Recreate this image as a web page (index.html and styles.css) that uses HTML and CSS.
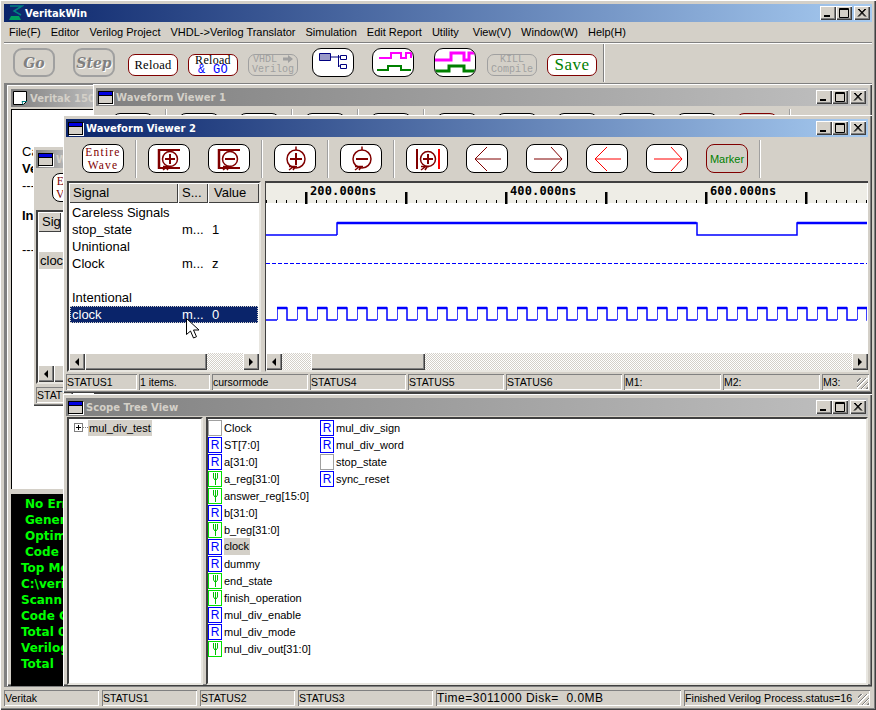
FILE: index.html
```html
<!DOCTYPE html>
<html>
<head>
<meta charset="utf-8">
<title>VeritakWin</title>
<link rel="stylesheet" href="styles.css">
</head>
<body>
<svg class="defs" width="0" height="0">
  <symbol id="ctl-min" viewBox="0 0 16 14"><rect x="4" y="9" width="6" height="2" fill="#000"/></symbol>
  <symbol id="ctl-max" viewBox="0 0 16 14"><path d="M3.500 2.500h9v9h-9z M3 3.500h10" fill="none" stroke="#000"/></symbol>
  <symbol id="ctl-close" viewBox="0 0 16 14"><path d="M4 3l7 7.500M5 3l7 7.500M11 3l-7 7.500M12 3l-7 7.500" stroke="#000" fill="none"/></symbol>
  <symbol id="wire" viewBox="0 0 7 14"><path d="M1.500 1v5l1.500 2M3.500 1v12M5.500 1v5l-1.500 2" stroke="#00c000" stroke-width="1" fill="none"/></symbol>
  <symbol id="handle" viewBox="0 0 42 29"><path d="M15 26l4-3M15 22.500h8M19 26l2-3" stroke="#800000" stroke-width="1.500" fill="none"/></symbol>
</svg>

<div class="app">
  <div class="title">
    <svg class="appicon" width="17" height="16" viewBox="0 0 17 16"><path d="M3 1h12L7 6l7 4" stroke="#008080" stroke-width="1.500" fill="none"/><path d="M2 15l2-4h8l2 4z" fill="#00a060"/></svg>
    <span class="title-text">VeritakWin</span>
    <div class="ctls">
      <span class="ctl"><svg><use href="#ctl-min"/></svg></span>
      <span class="ctl"><svg><use href="#ctl-max"/></svg></span>
      <span class="ctl ctl-x"><svg><use href="#ctl-close"/></svg></span>
    </div>
  </div>

  <div class="menu">
    <span>File(F)</span><span>Editor</span><span>Verilog Project</span><span>VHDL-&gt;Verilog Translator</span><span>Simulation</span><span>Edit Report</span><span>Utility</span><span class="menu-view">View(V)</span><span>Window(W)</span><span>Help(H)</span>
  </div>

  <div class="maintools">
    <div class="mb big off go">Go</div>
    <div class="mb big off go m18">Step</div>
    <div class="mb small red m13">Reload</div>
    <div class="mb small red two m10">Reload<b>&amp; GO</b></div>
    <div class="mb small off two m10">VHDL <svg width="10" height="8" viewBox="0 0 10 8"><path d="M0 2.500h5V0l5 4-5 4V5.500H0z" fill="#a0a0a0"/></svg><br>Verilog</div>
    <div class="mb big m14">
      <svg width="40" height="27" viewBox="314 49 40 27"><path d="M320.500 53.500h11v7h-11z" fill="#9a9ac8" stroke="#000080"/><path d="M331 57h8M339.500 55v12M339 57h2M339 66h2M341.500 55.500h6v4h-6zM341.500 64.500h6v4h-6z" fill="none" stroke="#000080"/></svg>
    </div>
    <div class="mb big m18">
      <svg width="40" height="27" viewBox="374 49 40 27"><path d="M380 58h12v-5h10v5h5v-5h5v5" fill="none" stroke="#ff00ff" stroke-width="2"/><path d="M378 70h11v-4h13v4h10" fill="none" stroke="#008000" stroke-width="2"/></svg>
    </div>
    <div class="mb big m20">
      <svg width="40" height="27" viewBox="436 49 40 27"><path d="M436 60h16v-7h13v7h5v-7h6" fill="none" stroke="#ff00ff" stroke-width="3"/><path d="M436 71h14v-5h15v5h11" fill="none" stroke="#008000" stroke-width="3"/></svg>
    </div>
    <div class="mb small off two m11">KILL<br>Compile</div>
    <div class="mb small red save m10">Save</div>
    <div class="tool-sep"></div>
  </div>

  <div class="mdi">

    <!-- compile log behind everything -->
    <div class="win win-log">
      <div class="title off">
        <svg class="docicon" width="16" height="16" viewBox="0 0 16 16"><path d="M1.500 1.500h13v10l-3 3h-10z" fill="#fff" stroke="#000"/><path d="M11 14.500l-1-3h5" fill="none" stroke="#008080"/></svg>
        <span class="title-text">Veritak 150</span>
      </div>
      <div class="log-top">
        <p>Ca</p>
        <p class="bold">Ve</p>
        <p>---</p>
        <p class="gap bold">In</p>
        <p class="gap2">---</p>
      </div>
      <div class="log-bottom">
        <p class="in">No Err</p>
        <p class="in">Gener</p>
        <p class="in">Optim</p>
        <p class="in">Code</p>
        <p>Top Mo</p>
        <p>C:\veri</p>
        <p>Scann</p>
        <p>Code C</p>
        <p>Total 0</p>
        <p>Verilog</p>
        <p>Total</p>
      </div>
    </div>

    <div class="win win-small">
      <div class="title off"><span class="wicon"></span><span class="title-text">W</span></div>
      <div class="small-tools"><div class="wb entire">E<br>V</div></div>
      <div class="sunk small-list">
        <div class="head"><span class="hcell">Sig</span></div>
        <div class="small-rows"><div class="small-sel">cloc</div></div>
        <div class="sbar"><span class="sb-btn"><i class="tri-l"></i></span><span class="sb-thumb"></span></div>
      </div>
      <div class="cells small-status"><span>STAT</span></div>
    </div>

    <div class="win win-wv1">
      <div class="title off">
        <span class="wicon"></span><span class="title-text">Waveform Viewer 1</span>
        <div class="ctls">
          <span class="ctl"><svg><use href="#ctl-min"/></svg></span>
          <span class="ctl"><svg><use href="#ctl-max"/></svg></span>
          <span class="ctl ctl-x"><svg><use href="#ctl-close"/></svg></span>
        </div>
      </div>
      <div class="wave-tools">
        <div class="wb"></div><i class="sep"></i>
        <div class="wb"></div><div class="wb next"></div><i class="sep"></i>
        <div class="wb"></div><i class="sep"></i>
        <div class="wb"></div><i class="sep"></i>
        <div class="wb"></div><div class="wb next"></div><div class="wb next"></div><div class="wb next"></div><div class="wb next"></div><div class="wb next marker"></div><i class="sep"></i>
      </div>
    </div>

    <div class="win win-wv2">
      <div class="title">
        <span class="wicon"></span><span class="title-text">Waveform Viewer 2</span>
        <div class="ctls">
          <span class="ctl"><svg><use href="#ctl-min"/></svg></span>
          <span class="ctl"><svg><use href="#ctl-max"/></svg></span>
          <span class="ctl ctl-x"><svg><use href="#ctl-close"/></svg></span>
        </div>
      </div>
      <div class="wave-tools">
        <div class="wb entire">Entire<br>Wave</div><i class="sep"></i>
        <div class="wb"><svg width="40" height="27" viewBox="1 1 40 27"><path d="M11 5v20" stroke="#800000" stroke-width="2.500"/><path d="M10 6h22M10 24h22" stroke="#800000" stroke-width="2"/><circle cx="22" cy="15" r="7.500" fill="#fff" stroke="#800000" stroke-width="1.500"/><path d="M17 15h10M22 10v10" stroke="#800000" stroke-width="2"/><use href="#handle" width="42" height="29"/></svg></div>
        <div class="wb next"><svg width="40" height="27" viewBox="1 1 40 27"><path d="M11 5v20" stroke="#800000" stroke-width="2.500"/><path d="M10 6h22M10 24h22" stroke="#800000" stroke-width="2"/><circle cx="22" cy="15" r="7.500" fill="#fff" stroke="#800000" stroke-width="1.500"/><path d="M17 15h10" stroke="#800000" stroke-width="2"/><use href="#handle" width="42" height="29"/></svg></div><i class="sep"></i>
        <div class="wb"><svg width="40" height="27" viewBox="1 1 40 27"><path d="M22 2.500v4" stroke="#800000" stroke-width="1.500"/><circle cx="22" cy="15" r="9" fill="#fff" stroke="#800000" stroke-width="1.500"/><path d="M16 15h12M22 9v12" stroke="#800000" stroke-width="2"/><use href="#handle" width="42" height="29"/></svg></div><i class="sep"></i>
        <div class="wb"><svg width="40" height="27" viewBox="1 1 40 27"><path d="M22 2.500v4" stroke="#800000" stroke-width="1.500"/><circle cx="22" cy="15" r="9" fill="#fff" stroke="#800000" stroke-width="1.500"/><path d="M16 15h12" stroke="#800000" stroke-width="2"/><use href="#handle" width="42" height="29"/></svg></div><i class="sep"></i>
        <div class="wb"><svg width="40" height="27" viewBox="1 1 40 27"><path d="M11 5v20" stroke="#800000" stroke-width="2"/><path d="M33 5v20" stroke="#ff0000" stroke-width="2"/><circle cx="22" cy="15" r="7.500" fill="#fff" stroke="#800000" stroke-width="1.500"/><path d="M17 15h10M22 10v10" stroke="#800000" stroke-width="2"/><use href="#handle" width="42" height="29"/></svg></div>
        <div class="wb next"><svg width="40" height="27" viewBox="1 1 40 27"><path d="M35 15H9M21 3L9 15l12 12" stroke="#800000" fill="none"/></svg></div>
        <div class="wb next"><svg width="40" height="27" viewBox="1 1 40 27"><path d="M8 15h28M25 3l11 12-11 12" stroke="#800000" fill="none"/></svg></div>
        <div class="wb next"><svg width="40" height="27" viewBox="1 1 40 27"><path d="M35 15H9M21 3L9 15l12 12" stroke="#ff0000" fill="none"/></svg></div>
        <div class="wb next"><svg width="40" height="27" viewBox="1 1 40 27"><path d="M8 15h28M25 3l11 12-11 12" stroke="#ff0000" fill="none"/></svg></div>
        <div class="wb next marker">Marker</div><i class="sep"></i>
      </div>

      <div class="panes">
        <div class="sunk signals">
          <div class="head">
            <span class="hcell h-name">Signal</span><span class="hcell h-s">S...</span><span class="hcell h-val">Value</span>
          </div>
          <div class="sig-rows">
            <div class="sig">Careless Signals</div>
            <div class="sig"><span>stop_state</span><span>m...</span><span>1</span></div>
            <div class="sig">Unintional</div>
            <div class="sig"><span>Clock</span><span>m...</span><span>z</span></div>
            <div class="sig"></div>
            <div class="sig">Intentional</div>
            <div class="sig sel"><span>clock</span><span>m...</span><span>0</span></div>
          </div>
          <div class="sbar">
            <span class="sb-btn"><i class="tri-l"></i></span>
            <span class="sb-thumb thumb-sig"></span>
            <span class="sb-track"></span>
            <span class="sb-btn"><i class="tri-r"></i></span>
          </div>
        </div>
        <div class="sunk trace">
          <svg class="plot" width="601" height="170" viewBox="266 183 601 170">
            <rect x="266" y="183" width="602" height="20" fill="#eeede6"/>
            <path d="M266 201.500H868" stroke="#000" stroke-width="3" stroke-dasharray="1 9"/>
            <path d="M305 198H868" stroke="#000" stroke-width="12" stroke-dasharray="2.500 97.500"/>
            <text class="tick" x="310" y="195">200.000ns</text>
            <text class="tick" x="510" y="195">400.000ns</text>
            <text class="tick" x="710" y="195">600.000ns</text>
            <path d="M266 235H337" stroke="#0000ff" stroke-width="1.500"/>
            <path d="M337 235V223H697V235H797V223H868" fill="none" stroke="#0000ff" stroke-width="1.500"/>
            <path d="M337 223H696.500M797 223H868" stroke="#0000ff" stroke-width="2.500"/>
            <path d="M266 263.500H868" stroke="#0000ff" stroke-dasharray="4 2"/>
            <defs>
              <pattern id="clk" x="277" y="306" width="20" height="16" patternUnits="userSpaceOnUse">
                <path d="M0 14V2H10V14H20" fill="none" stroke="#0000ff" stroke-width="1.500"/>
                <path d="M0 2H10" stroke="#0000ff" stroke-width="2.500"/>
              </pattern>
            </defs>
            <path d="M266 320H277" stroke="#0000ff" stroke-width="1.500"/>
            <rect x="277" y="306" width="591" height="16" fill="url(#clk)"/>
          </svg>
          <div class="sbar">
            <span class="sb-btn"><i class="tri-l"></i></span>
            <span class="sb-track t-a"></span>
            <span class="sb-thumb thumb-wave"></span>
            <span class="sb-track"></span>
            <span class="sb-btn"><i class="tri-r"></i></span>
          </div>
        </div>
      </div>

      <div class="cells wv-status">
        <span>STATUS1</span><span>1 items.</span><span>cursormode</span><span>STATUS4</span><span>STATUS5</span><span>STATUS6</span><span>M1:</span><span>M2:</span><span class="grip">M3:</span>
      </div>
    </div>

    <div class="win win-scope">
      <div class="title off">
        <span class="wicon"></span><span class="title-text">Scope Tree View</span>
        <div class="ctls">
          <span class="ctl"><svg><use href="#ctl-min"/></svg></span>
          <span class="ctl"><svg><use href="#ctl-max"/></svg></span>
          <span class="ctl ctl-x"><svg><use href="#ctl-close"/></svg></span>
        </div>
      </div>
      <div class="scope-body">
        <div class="sunk tree">
          <div class="tree-row"><span class="plus"></span><span class="dots"></span><span class="tree-label">mul_div_test</span></div>
        </div>
        <div class="sunk nets">
          <div class="net"><i class="ic e"></i>Clock</div>
          <div class="net"><i class="ic r">R</i>ST[7:0]</div>
          <div class="net"><i class="ic r">R</i>a[31:0]</div>
          <div class="net"><i class="ic w"><svg><use href="#wire"/></svg></i>a_reg[31:0]</div>
          <div class="net"><i class="ic w"><svg><use href="#wire"/></svg></i>answer_reg[15:0]</div>
          <div class="net"><i class="ic r">R</i>b[31:0]</div>
          <div class="net"><i class="ic w"><svg><use href="#wire"/></svg></i>b_reg[31:0]</div>
          <div class="net"><i class="ic r">R</i><span class="hit">clock</span></div>
          <div class="net"><i class="ic r">R</i>dummy</div>
          <div class="net"><i class="ic w"><svg><use href="#wire"/></svg></i>end_state</div>
          <div class="net"><i class="ic w"><svg><use href="#wire"/></svg></i>finish_operation</div>
          <div class="net"><i class="ic r">R</i>mul_div_enable</div>
          <div class="net"><i class="ic r">R</i>mul_div_mode</div>
          <div class="net"><i class="ic w"><svg><use href="#wire"/></svg></i>mul_div_out[31:0]</div>
          <div class="net"><i class="ic r">R</i>mul_div_sign</div>
          <div class="net"><i class="ic r">R</i>mul_div_word</div>
          <div class="net"><i class="ic e"></i>stop_state</div>
          <div class="net"><i class="ic r">R</i>sync_reset</div>
        </div>
      </div>
    </div>

    <!-- mouse pointer -->
    <svg class="pointer" width="14" height="21" viewBox="0 0 14 21"><path d="M.5.500v16l4-3.500 3 7 3-1.300-3-6.700h5.500z" fill="#fff" stroke="#000"/></svg>
  </div>

  <div class="cells main-status">
    <span>Veritak</span><span>STATUS1</span><span>STATUS2</span><span>STATUS3</span><span class="time">Time=3011000 Disk=&nbsp; 0.0MB</span><span class="grip finished">Finished Verilog Process.status=16</span>
  </div>
</div>
</body>
</html>
```

FILE: styles.css
```css
* { box-sizing: border-box; }

body {
  margin: 0;
  font-family: "Liberation Sans", Arial, sans-serif;
  font-size: 11px;
  color: #000;
  background: #d4d0c8;
}

p { margin: 0; }

.defs { position: absolute; }

.app {
  width: 876px;
  height: 710px;
  padding: 4px;
  display: flex;
  flex-direction: column;
  background: #d4d0c8;
  box-shadow: inset 1px 1px 0 #fff, inset -1px -1px 0 #404040, inset -2px -2px 0 #808080;
  overflow: hidden;
}

/* title bars */
.title {
  height: 18px;
  flex: none;
  display: flex;
  align-items: center;
  color: #fff;
  background: linear-gradient(to right, #0a246a, #a6caf0);
  overflow: hidden;
  white-space: nowrap;
}

.title.off {
  color: #d4d0c8;
  background: linear-gradient(to right, #808080, #c0c0c0);
}

.title-text {
  font-family: "DejaVu Sans", sans-serif;
  font-size: 10px;
  font-weight: bold;
}

.appicon { margin: 0 1px 0 3px; }
.docicon { margin: 0 2px 0 1px; flex: none; }

.wicon {
  width: 15px;
  height: 13px;
  margin: 0 3px 0 2px;
  flex: none;
  background: linear-gradient(#0000e0 3px, #000 3px, #000 4px, #d4d0c8 4px);
  border: 1px solid #000;
  box-shadow: 1px 1px 0 #fff;
}

.ctls {
  margin-left: auto;
  display: flex;
  margin-right: 2px;
}

.ctl {
  width: 16px;
  height: 14px;
  background: #d4d0c8;
  box-shadow: inset 1px 1px 0 #fff, inset -1px -1px 0 #404040, inset -2px -2px 0 #808080;
}

.ctl svg { display: block; width: 16px; height: 14px; }
.ctl-x { margin-left: 2px; }

/* menu and main toolbar */
.menu {
  height: 20px;
  flex: none;
  display: flex;
  align-items: center;
  gap: 10px;
  padding-left: 5px;
}

.menu-view { margin-left: 4px; }

.maintools {
  height: 42px;
  flex: none;
  display: flex;
  align-items: flex-start;
  padding: 5px 0 0 9px;
  border-top: 1px solid #808080;
  box-shadow: inset 0 1px 0 #fff, inset 0 -1px 0 #808080;
}

.mb {
  flex: none;
  display: flex;
  align-items: center;
  justify-content: center;
  text-align: center;
  background: #fff;
  border: 1px solid #000;
  overflow: hidden;
}

.mb.big { width: 42px; height: 29px; border-radius: 9px; }
.mb.small { width: 50px; height: 22px; margin-top: 6px; border-radius: 7px; }

.mb.off {
  background: #d4d0c8;
  color: #a0a0a0;
  border-color: #a0a0a0;
}

.mb.go {
  border-width: 2px;
  font-family: "DejaVu Serif", serif;
  font-size: 14px;
  font-weight: bold;
  font-style: italic;
  color: #808080;
  text-shadow: 1px 1px 0 #fff;
}

.mb.red {
  border-color: #800000;
  font-family: "Liberation Serif", serif;
  font-size: 12.500px;
  letter-spacing: .3px;
}

.mb.two {
  display: block;
  font-family: "Liberation Mono", monospace;
  font-size: 10px;
  line-height: 10px;
}

.mb.red.two { font-family: "Liberation Serif", serif; font-size: 12px; }

.mb.two b {
  display: block;
  font-family: "Liberation Mono", monospace;
  font-size: 12px;
  font-weight: normal;
  color: #0000ff;
}

.mb.two svg { vertical-align: -1px; }

.mb.red.save { color: #008000; font-size: 17px; letter-spacing: .5px; }

.m10 { margin-left: 10px; }
.m11 { margin-left: 11px; }
.m13 { margin-left: 13px; }
.m14 { margin-left: 14px; }
.m18 { margin-left: 18px; }
.m20 { margin-left: 20px; }

.tool-sep {
  width: 2px;
  height: 38px;
  margin: -4px 0 0 6px;
  background: #fff;
  border-left: 1px solid #808080;
}

/* client area, the windows float on it */
.mdi {
  position: relative;
  flex: 1;
  overflow: hidden;
  background: #808080;
  box-shadow: inset 1px 1px 0 #808080;
}

.win {
  position: absolute;
  display: flex;
  flex-direction: column;
  background: #d4d0c8;
  padding: 4px 4px 3px 3px;
  box-shadow: inset 1px 1px 0 #fff, inset -1px -1px 0 #404040, inset -2px -2px 0 #808080;
  overflow: hidden;
}

.win-log { left: 3px; top: 1px; width: 96px; height: 601px; padding: 4px 0 0 4px; }
.win-small { left: 29px; top: 62px; width: 40px; height: 260px; }
.win-wv1 { left: 89px; top: 0; width: 779px; height: 310px; }
.win-wv2 { left: 59px; top: 31px; width: 809px; height: 278px; }
.win-scope { left: 59px; top: 310px; width: 809px; height: 292px; padding-bottom: 0; }

/* compile log */
.log-top {
  height: 380px;
  flex: none;
  margin-top: 2px;
  padding: 33px 0 0 10px;
  background: #fff;
  border: 1px solid #000;
  border-width: 1px 0 0 1px;
  line-height: 17px;
  font-size: 13px;
}

.bold { font-weight: bold; }
.gap { margin-top: 13px; }
.gap2 { margin-top: 17px; }

.log-bottom {
  flex: 1;
  margin-top: 5px;
  padding: 2px 0 0 10px;
  background: #000;
  color: #00ff00;
  font-family: "DejaVu Sans", sans-serif;
  font-size: 12px;
  font-weight: bold;
  line-height: 16px;
  white-space: nowrap;
  overflow: hidden;
}

.log-bottom .in { padding-left: 4px; }

/* mostly hidden behind viewer 2, only its left strip shows */
.small-tools {
  height: 42px;
  flex: none;
  padding: 5px 0 0 16px;
}

.small-tools .wb { justify-content: flex-start; padding-left: 3px; }

.small-list {
  flex: 1;
  display: flex;
  flex-direction: column;
  font-size: 13px;
}

.small-rows { flex: 1; background: #fff; padding-top: 20px; }
.small-sel { height: 17px; margin-left: 1px; padding-left: 1px; line-height: 17px; background: #d4d0c8; }
.small-status { margin-top: 3px; grid-template-columns: 90px; }

/* viewer toolbars */
.wave-tools {
  height: 44px;
  flex: none;
  display: flex;
  padding: 7px 0 0 16px;
}

.wb {
  width: 42px;
  height: 29px;
  flex: none;
  display: flex;
  align-items: center;
  justify-content: center;
  background: #fff;
  border: 1px solid #000;
  border-radius: 8px;
  overflow: hidden;
}

.wb.next { margin-left: 18px; }

.wb.entire {
  font-family: "Liberation Serif", serif;
  font-size: 11.500px;
  line-height: 13px;
  letter-spacing: 1.2px;
  text-align: center;
  color: #800000;
}

.wb.marker {
  border-color: #800000;
  color: #008000;
  background: #d4d0c8;
}

.sep {
  width: 2px;
  height: 38px;
  margin: -4px 11px 0 11px;
  flex: none;
  background: #fff;
  border-left: 1px solid #a0a0a0;
}

/* viewer panes */
.panes {
  height: 191px;
  flex: none;
  display: flex;
  gap: 4px;
  padding-left: 1px;
  font-size: 13px;
}

.sunk {
  background: #fff;
  border: 2px solid;
  border-color: #404040 #e8e6e0 #e8e6e0 #404040;
}

.signals {
  width: 194px;
  flex: none;
  display: flex;
  flex-direction: column;
}

.trace {
  flex: 1;
  display: flex;
  flex-direction: column;
  min-width: 0;
  border-width: 2px 0 2px 1px;
}

.plot { display: block; flex: none; }

.head {
  height: 20px;
  flex: none;
  display: flex;
}

.hcell {
  padding: 2px 0 0 4px;
  background: #d4d0c8;
  overflow: hidden;
  white-space: nowrap;
  box-shadow: inset 1px 1px 0 #fff, inset -1px -1px 0 #404040;
}

.h-name { width: 109px; }
.h-s { width: 30px; }
.h-val { flex: 1; padding-left: 6px; }

.sig-rows { flex: 1; padding-top: 1px; }

.sig {
  height: 17px;
  padding: 0 3px;
  line-height: 17px;
  display: grid;
  grid-template-columns: 110px 30px 1fr;
  white-space: nowrap;
}

.sig.sel {
  margin: 0 1px;
  padding: 0 2px;
  color: #fff;
  background: #0a246a;
  outline: 1px dotted #d4d0c8;
  outline-offset: -1px;
}

/* scrollbars */
.sbar {
  height: 17px;
  flex: none;
  display: flex;
  background: repeating-conic-gradient(#d4d0c8 0 25%, #fff 0 50%) 0 0 / 2px 2px;
}

.sb-btn,
.sb-thumb {
  background: #d4d0c8;
  box-shadow: inset 1px 1px 0 #fff, inset -1px -1px 0 #404040, inset -2px -2px 0 #808080;
}

.sb-btn {
  width: 16px;
  flex: none;
  display: flex;
  align-items: center;
  justify-content: center;
}

.sb-track { flex: 1; }
.sb-thumb { flex: 1; }
.thumb-sig { flex: none; width: 122px; }
.thumb-wave { flex: none; width: 114px; }
.t-a { flex: none; width: 29px; }

.tri-l,
.tri-r {
  width: 0;
  height: 0;
  border: 4px solid transparent;
}

.tri-l { border-right-color: #000; border-left-width: 0; }
.tri-r { border-left-color: #000; border-right-width: 0; }

.tick {
  font-family: "DejaVu Sans Mono", monospace;
  font-size: 12px;
  font-weight: bold;
  letter-spacing: .15px;
}

/* status bars */
.cells {
  display: grid;
  flex: none;
  font-size: 10.500px;
}

.cells span {
  height: 16px;
  padding-left: 1px;
  line-height: 16px;
  overflow: hidden;
  white-space: nowrap;
  box-shadow: inset 1px 1px 0 #808080, inset -1px -1px 0 #fff;
}

.cells .time { font-size: 12px; letter-spacing: .5px; }
.cells .finished { font-size: 10.700px; }

.wv-status {
  margin: 2px 0 0 0;
  grid-template-columns: 71px 71px 96px 96px 96px 116px 97px 97px 47px;
  gap: 2px;
}

.main-status {
  margin-top: 3px;
  grid-template-columns: 95px 95px 95px 135px 245px 186px;
  gap: 3px;
}

.grip {
  background: repeating-linear-gradient(135deg, transparent 0 2px, #808080 2px 3px, #fff 3px 4px) right bottom / 12px 12px no-repeat;
}

/* scope tree */
.scope-body {
  flex: 1;
  display: flex;
  gap: 3px;
  padding: 1px 0 1px 1px;
  min-height: 0;
}

.tree {
  width: 136px;
  flex: none;
}

.tree-row {
  height: 17px;
  display: flex;
  align-items: center;
  padding-left: 5px;
}

.plus {
  width: 9px;
  height: 9px;
  border: 1px solid #808080;
  background: linear-gradient(#000, #000) center / 5px 1px no-repeat, linear-gradient(#000, #000) center / 1px 5px no-repeat;
}

.dots { width: 5px; border-top: 1px dotted #808080; }

.tree-label {
  height: 16px;
  padding: 0 1px;
  line-height: 16px;
  background: #d4d0c8;
}

.nets {
  flex: 1;
  display: grid;
  grid-auto-flow: column;
  grid-template-rows: repeat(14, 17px);
  grid-template-columns: 112px 1fr;
  align-content: start;
}

.net {
  display: flex;
  align-items: center;
  white-space: nowrap;
}

.ic {
  width: 14px;
  height: 16px;
  margin-right: 2px;
  flex: none;
  display: flex;
  align-items: center;
  justify-content: center;
  background: #fff;
  border: 1px solid;
  font-size: 12px;
  font-style: normal;
}

.ic.r { border-color: #0000ff; color: #0000ff; }
.ic.w { border-color: #00e000; }
.ic.w svg { width: 7px; height: 14px; }
.ic.e { border-color: #a0a0a0; }

.hit {
  height: 17px;
  padding-right: 1px;
  line-height: 17px;
  background: #d4d0c8;
}

.pointer {
  position: absolute;
  left: 182px;
  top: 234px;
}
```
